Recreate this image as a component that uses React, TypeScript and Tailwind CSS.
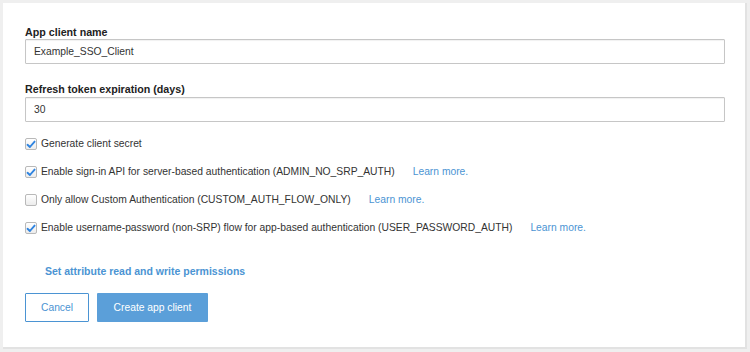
import React from "react";

const font = { fontFamily: '"Liberation Sans", Arial, Helvetica, sans-serif' };

const Check: React.FC<{ checked: boolean }> = ({ checked }) => (
  <span className="flex h-[12px] w-[12px] shrink-0 items-center justify-center rounded-[2px] border border-[#b9b9b9] bg-gradient-to-b from-white to-[#ececec]">
    {checked && (
      <svg width="10" height="9" viewBox="0 0 10 9">
        <path d="M1.5 4.8 L3.9 7 L8.6 1.6" fill="none" stroke="#2f84e0" strokeWidth="1.9" strokeLinecap="round" strokeLinejoin="round" />
      </svg>
    )}
  </span>
);

const Row: React.FC<{ checked: boolean; label: string; more?: boolean }> = ({ checked, label, more }) => (
  <div className="flex h-[28px] items-center">
    <Check checked={checked} />
    <span className="ml-[4px] text-[#333]">{label}</span>
    {more && <a className="ml-[18px] text-[#4b94d3]">Learn more.</a>}
  </div>
);

const App: React.FC = () => {
  return (
    <div className="h-[352px] w-[750px] bg-[#efefef] pt-[3px] pl-[3px] text-[10.3px] leading-[14px]" style={font}>
      <div className="h-[346px] w-[744px] border-r-2 border-b-2 border-[#e2e2e2] bg-white pt-[22px] pl-[22px]">
        <label className="block text-[10.7px] font-bold text-[#222]">App client name</label>
        <div className="flex h-[25px] w-[700px] items-center rounded-[1px] border border-[#c6c6c6] pl-[8px] text-[#333] shadow-[inset_0_1px_1px_rgba(0,0,0,0.06)]">
          Example_SSO_Client
        </div>
        <label className="mt-[18px] mb-[1px] block text-[10.7px] font-bold text-[#222]">Refresh token expiration (days)</label>
        <div className="flex h-[25px] w-[700px] items-center rounded-[1px] border border-[#c6c6c6] pl-[8px] text-[#333] shadow-[inset_0_1px_1px_rgba(0,0,0,0.06)]">
          30
        </div>
        <div className="mt-[8px] flex flex-col">
          <Row checked label="Generate client secret" />
          <Row checked label="Enable sign-in API for server-based authentication (ADMIN_NO_SRP_AUTH)" more />
          <Row checked={false} label="Only allow Custom Authentication (CUSTOM_AUTH_FLOW_ONLY)" more />
          <Row checked label="Enable username-password (non-SRP) flow for app-based authentication (USER_PASSWORD_AUTH)" more />
        </div>
        <a className="mt-[22px] block pl-[20px] text-[10.5px] font-bold text-[#4b94d3]">Set attribute read and write permissions</a>
        <div className="mt-[15px] flex gap-[8px]">
          <button className="h-[29px] w-[64px] rounded-[1px] border border-[#4b94d3] bg-white text-[#4b94d3]">Cancel</button>
          <button className="h-[29px] w-[111px] rounded-[1px] bg-[#5b9fd9] text-white">Create app client</button>
        </div>
      </div>
    </div>
  );
};

export default App;
